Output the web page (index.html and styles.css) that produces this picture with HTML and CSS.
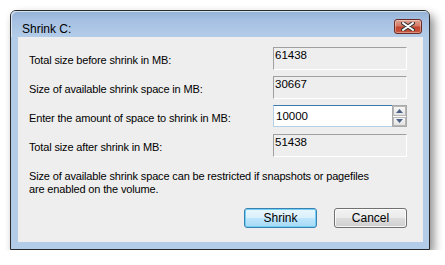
FILE: index.html
```html
<!DOCTYPE html>
<html lang="en">
<head>
    <meta charset="UTF-8">
    <title>Shrink C:</title>
    <link rel="stylesheet" href="styles.css">
</head>
<body>
    <!-- Dialog window -->
    <div class="window">
        <div class="titlebar">
            <span class="title">Shrink C:</span>
            <button class="close-btn" aria-label="Close">
                <svg width="14" height="9" viewBox="0 0 14 9">
                    <path d="M2 1 L12 8 M12 1 L2 8" stroke="#3a3a3a" stroke-width="4" stroke-linecap="round"/>
                    <path d="M2 1 L12 8 M12 1 L2 8" stroke="#ffffff" stroke-width="2" stroke-linecap="round"/>
                </svg>
            </button>
        </div>

        <div class="client">
            <div class="form-grid">
                <span class="label">Total size before shrink in MB:</span>
                <div class="static-field">61438</div>

                <span class="label">Size of available shrink space in MB:</span>
                <div class="static-field">30667</div>

                <span class="label">Enter the amount of space to shrink in MB:</span>
                <div class="spin-field">
                    <input class="spin-input" type="text" value="10000">
                    <div class="spin-buttons">
                        <span class="spin-btn">
                            <svg width="7" height="4" viewBox="0 0 7 4"><path d="M0 4 L3.5 0 L7 4 Z" fill="#4d6185"/></svg>
                        </span>
                        <span class="spin-btn">
                            <svg width="7" height="4" viewBox="0 0 7 4"><path d="M0 0 L7 0 L3.5 4 Z" fill="#4d6185"/></svg>
                        </span>
                    </div>
                </div>

                <span class="label">Total size after shrink in MB:</span>
                <div class="static-field">51438</div>
            </div>

            <p class="note">Size of available shrink space can be restricted if snapshots or pagefiles<br>are enabled on the volume.</p>

            <div class="actions">
                <button class="btn btn-default">Shrink</button>
                <button class="btn">Cancel</button>
            </div>
        </div>
    </div>
</body>
</html>
```

FILE: styles.css
```css
/* Windows 7 style palette */
:root {
    --frame-dark: #2a2a2a;
    --frame-blue: #b3cce8;
    --client-bg: #eeeeee;
    --text: #000000;
    --field-grey: #a0a0a0;
    --field-white: #ffffff;
}

body {
    margin: 0;
    background: #ffffff;
    font-family: 'Liberation Sans', Arial, sans-serif;
    font-size: 11px;
    letter-spacing: -0.15px;
    color: var(--text);
}

/* Window frame */
.window {
    margin: 10px 0 0 10px;
    width: 418px;
    height: 238px;
    border: 1px solid var(--frame-dark);
    border-radius: 6px 6px 0 0;
    background: var(--frame-blue);
    box-shadow: 4px 5px 10px rgba(0, 0, 0, 0.45);
    display: flex;
    flex-direction: column;
}

.titlebar {
    height: 26px;
    flex-shrink: 0;
    display: flex;
    align-items: flex-start;
    justify-content: space-between;
    padding: 0 7px 0 11px;
    border-radius: 5px 5px 0 0;
    background: linear-gradient(to bottom, #94b2d7 0%, #a6c1e2 40%, #b3cce8 100%);
    box-shadow: inset 1px 1px 0 rgba(255, 255, 255, 0.6);
}

.title {
    margin-top: 11px;
    font-size: 12px;
    letter-spacing: 0;
}

.close-btn {
    margin-top: 8px;
    width: 28px;
    height: 15px;
    padding: 0;
    border: 1px solid #6b2b22;
    border-radius: 3px;
    background: linear-gradient(to bottom, #e2a291 0%, #d47a66 45%, #c0452f 55%, #c8573d 100%);
    box-shadow: inset 0 0 0 1px rgba(255, 255, 255, 0.35);
    display: flex;
    align-items: center;
    justify-content: center;
}

/* Client area */
.client {
    flex-grow: 1;
    margin: 0 6px 7px 7px;
    background: var(--client-bg);
    padding: 10px 16px 0 11px;
    display: flex;
    flex-direction: column;
}

.form-grid {
    display: grid;
    grid-template-columns: 1fr 134px;
    grid-auto-rows: 23px;
    row-gap: 6px;
}

.label {
    align-self: center;
    padding-top: 3px;
}

.static-field {
    border: 1px solid var(--field-grey);
    border-right-color: var(--field-white);
    border-bottom-color: var(--field-white);
    padding: 1px 0 0 1px;
    line-height: 13px;
    font-size: 11.5px;
    letter-spacing: 0;
}

.spin-field {
    display: flex;
    height: 22px;
}

.spin-input {
    flex-grow: 1;
    min-width: 0;
    margin: 0;
    border: 1px solid #b5cfe7;
    border-top-color: #3d7bad;
    border-right: none;
    background: #ffffff;
    font: inherit;
    font-size: 11.5px;
    padding: 0 0 0 2px;
    outline: none;
}

.spin-buttons {
    width: 17px;
    border: 1px solid #a9a9a9;
    background: #ffffff;
    display: flex;
    flex-direction: column;
    gap: 1px;
}

.spin-btn {
    flex-grow: 1;
    border: 1px solid #b6b6b6;
    background: linear-gradient(to bottom, #f7f7f7, #e3e3e3);
    display: flex;
    align-items: center;
    justify-content: center;
}

.note {
    margin: 13px 0 0 0;
    line-height: 13px;
    white-space: nowrap;
}

.actions {
    margin-top: 12px;
    display: flex;
    justify-content: flex-end;
    gap: 17px;
}

.btn {
    width: 73px;
    height: 20px;
    padding: 0;
    border: 1px solid #707070;
    border-radius: 3px;
    font: inherit;
    font-size: 12px;
    color: var(--text);
    background: linear-gradient(to bottom, #f2f2f2 0%, #ebebeb 50%, #dddddd 51%, #cfcfcf 100%);
    box-shadow: inset 0 0 0 1px rgba(255, 255, 255, 0.8);
}

.btn-default {
    border-color: #3c7fb1;
    background: linear-gradient(to bottom, #eaf6fd 0%, #d9f0fc 50%, #bee6fd 51%, #a7d9f5 100%);
    box-shadow: inset 0 0 0 1px #6ed1f5;
}
```
